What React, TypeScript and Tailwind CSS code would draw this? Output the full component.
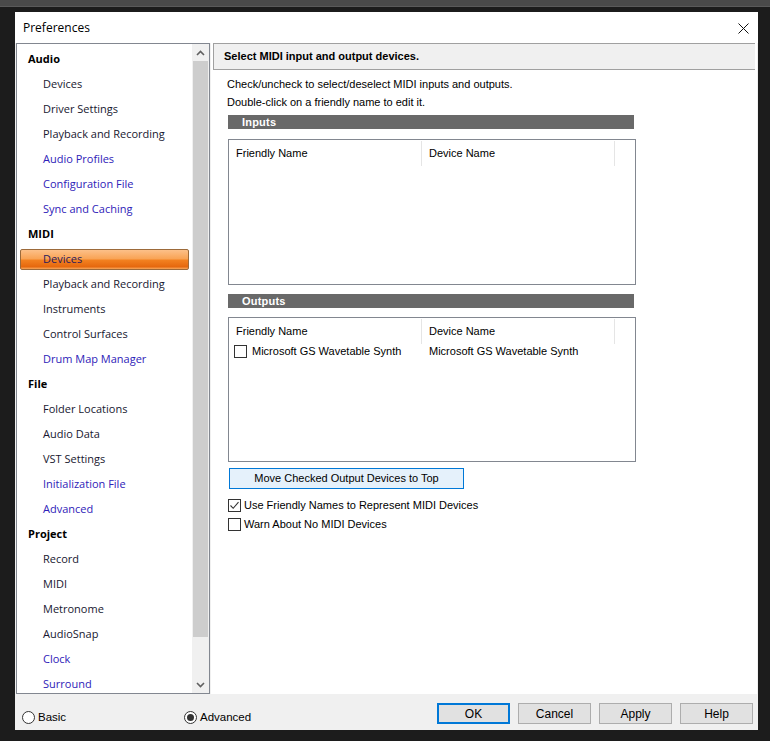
const groups: { title: string; items: [string, boolean][] }[] = [
  {
    title: "Audio",
    items: [
      ["Devices", false],
      ["Driver Settings", false],
      ["Playback and Recording", false],
      ["Audio Profiles", true],
      ["Configuration File", true],
      ["Sync and Caching", true],
    ],
  },
  {
    title: "MIDI",
    items: [
      ["Devices", false],
      ["Playback and Recording", false],
      ["Instruments", false],
      ["Control Surfaces", false],
      ["Drum Map Manager", true],
    ],
  },
  {
    title: "File",
    items: [
      ["Folder Locations", false],
      ["Audio Data", false],
      ["VST Settings", false],
      ["Initialization File", true],
      ["Advanced", true],
    ],
  },
  {
    title: "Project",
    items: [
      ["Record", false],
      ["MIDI", false],
      ["Metronome", false],
      ["AudioSnap", false],
      ["Clock", true],
      ["Surround", true],
    ],
  },
];

const Chevron = ({ up }: { up?: boolean }) => (
  <svg width="9" height="6" viewBox="0 0 9 6" className={up ? "" : "rotate-180"}>
    <path d="M1 5 L4.5 1.5 L8 5" fill="none" stroke="#606060" strokeWidth="1.6" />
  </svg>
);

const CheckBox = ({ checked }: { checked?: boolean }) => (
  <div className="w-[13px] h-[13px] border border-[#333] bg-white flex items-center justify-center shrink-0">
    {checked && (
      <svg width="11" height="11" viewBox="0 0 11 11">
        <path d="M1.5 5.5 L4.2 8.3 L9.5 2.2" fill="none" stroke="#333" strokeWidth="1.1" />
      </svg>
    )}
  </div>
);

const Radio = ({ checked }: { checked?: boolean }) => (
  <div className="w-[13px] h-[13px] rounded-full border border-[#333] bg-white flex items-center justify-center shrink-0">
    {checked && <div className="w-[7px] h-[7px] rounded-full bg-[#333]" />}
  </div>
);

const DeviceList = ({ rows }: { rows: string[] }) => (
  <div className="w-[408px] border border-[#828790] bg-white h-full">
    <div className="flex h-[26px] items-center">
      <div className="w-[193px] h-[25px] flex items-center pl-[7px] border-r border-[#e5e5e5]">Friendly Name</div>
      <div className="w-[193px] h-[25px] flex items-center pl-[7px] border-r border-[#e5e5e5]">Device Name</div>
    </div>
    {rows.map((r) => (
      <div key={r} className="flex h-[15px] items-center">
        <div className="w-[193px] flex items-center pl-[5px] gap-[5px]">
          <CheckBox />
          <span>{r}</span>
        </div>
        <div className="w-[193px] pl-[7px]">{r}</div>
      </div>
    ))}
  </div>
);

const SectionBar = ({ label }: { label: string }) => (
  <div className="w-[406px] h-[14px] bg-[#696969] text-white font-bold flex items-center pl-[14px] text-[11px] tracking-[0.2px]">
    {label}
  </div>
);

export default function App() {
  return (
    <div className="w-[770px] h-[741px] bg-[#1c1c1c] overflow-hidden font-['Liberation_Sans',Arial,sans-serif]">
      <div className="h-[7px] bg-[#4a4a4a] border-b border-[#5a5a5a]" />
      <div className="ml-[15px] mt-[5px] w-[743px] h-[718px] bg-[#f0f0f0] flex flex-col">
        {/* title bar */}
        <div className="h-[31px] bg-white flex items-center justify-between pl-[8px] pr-[9px] pt-[1px] shrink-0">
          <span className="text-[12px] text-black font-['Open_Sans',sans-serif]">Preferences</span>
          <svg width="11" height="11" viewBox="0 0 11 11">
            <path d="M0.5 0.5 L10.5 10.5 M10.5 0.5 L0.5 10.5" stroke="#111" strokeWidth="1" />
          </svg>
        </div>

        <div className="flex h-[651px] shrink-0">
          {/* sidebar */}
          <div className="ml-[1px] w-[194px] h-[651px] border border-[#828790] bg-white flex">
            <div className="flex-1 pt-[2px] font-['Open_Sans',sans-serif] text-[11px] overflow-hidden">
              {groups.map((g, gi) => (
                <div key={g.title}>
                  <div className="h-[25px] flex items-center pl-[11px] pt-[1px] font-bold text-black">{g.title}</div>
                  {g.items.map(([name, blue]) => {
                    const selected = gi === 1 && name === "Devices";
                    if (selected)
                      return (
                        <div key={name} className="h-[25px] flex items-center pt-[1px]">
                          <div className="ml-[3px] mr-[3px] flex-1 h-[21px] rounded-[2px] border border-[#9c6a3a] bg-[linear-gradient(to_bottom,#fcc089_0%,#f9a456_45%,#f2801f_55%,#e6680e_88%,#f9a95c_100%)] flex items-center pl-[22px] text-[#2a1a5e]">
                            {name}
                          </div>
                        </div>
                      );
                    return (
                      <div
                        key={name}
                        className={`h-[25px] flex items-center pl-[26px] pt-[1px] ${blue ? "text-[#2e22b8]" : "text-[#17172f]"}`}
                      >
                        {name}
                      </div>
                    );
                  })}
                </div>
              ))}
            </div>
            {/* scrollbar */}
            <div className="w-[17px] bg-[#f0f0f0] flex flex-col">
              <div className="h-[17px] flex items-center justify-center">
                <Chevron up />
              </div>
              <div className="h-[576px] bg-[#cdcdcd] mx-[1px]" />
              <div className="flex-1" />
              <div className="h-[17px] flex items-center justify-center">
                <Chevron />
              </div>
            </div>
          </div>

          {/* right pane */}
          <div className="ml-[1px] w-[546px] bg-white flex flex-col text-[11px] text-black">
            <div className="ml-[2px] mr-[2px] h-[27px] bg-[#f0f0f0] border-y border-l border-[#a0a0a0] flex items-center pl-[10px] font-bold">
              Select MIDI input and output devices.
            </div>
            <div className="pl-[16px] flex flex-col">
              <div className="mt-[5px] h-[18px] flex items-center">Check/uncheck to select/deselect MIDI inputs and outputs.</div>
              <div className="h-[18px] flex items-center">Double-click on a friendly name to edit it.</div>
              <div className="mt-[4px] pl-[1px]">
                <SectionBar label="Inputs" />
              </div>
              <div className="mt-[10px] h-[146px] pl-[1px]">
                <DeviceList rows={[]} />
              </div>
              <div className="mt-[9px] pl-[1px]">
                <SectionBar label="Outputs" />
              </div>
              <div className="mt-[9px] h-[145px] pl-[1px]">
                <DeviceList rows={["Microsoft GS Wavetable Synth"]} />
              </div>
              <div className="mt-[6px] pl-[2px]">
                <div className="w-[235px] h-[21px] bg-[#e5f1fb] border border-[#0078d7] flex items-center justify-center">
                  Move Checked Output Devices to Top
                </div>
              </div>
              <div className="mt-[9px] h-[15px] flex items-center gap-[3px] pl-[1px]">
                <CheckBox checked />
                <span>Use Friendly Names to Represent MIDI Devices</span>
              </div>
              <div className="mt-[4px] h-[15px] flex items-center gap-[3px] pl-[1px]">
                <CheckBox />
                <span>Warn About No MIDI Devices</span>
              </div>
            </div>
          </div>
        </div>

        {/* bottom bar */}
        <div className="flex-1 flex items-start text-black">
          <div className="mt-[15px] ml-[7px] w-[162px] flex items-center gap-[3px] text-[11.5px]">
            <Radio />
            <span>Basic</span>
          </div>
          <div className="mt-[15px] flex items-center gap-[3px] text-[11.5px]">
            <Radio checked />
            <span>Advanced</span>
          </div>
          <div className="mt-[9px] ml-auto mr-[5px] flex gap-[8px] text-[12px]">
            <div className="w-[73px] h-[21px] border-2 border-[#0078d7] bg-[#e1e1e1] flex items-center justify-center">OK</div>
            <div className="w-[73px] h-[21px] border border-[#adadad] bg-[#e1e1e1] flex items-center justify-center">Cancel</div>
            <div className="w-[73px] h-[21px] border border-[#adadad] bg-[#e1e1e1] flex items-center justify-center">Apply</div>
            <div className="w-[73px] h-[21px] border border-[#adadad] bg-[#e1e1e1] flex items-center justify-center">Help</div>
          </div>
        </div>
      </div>
    </div>
  );
}
